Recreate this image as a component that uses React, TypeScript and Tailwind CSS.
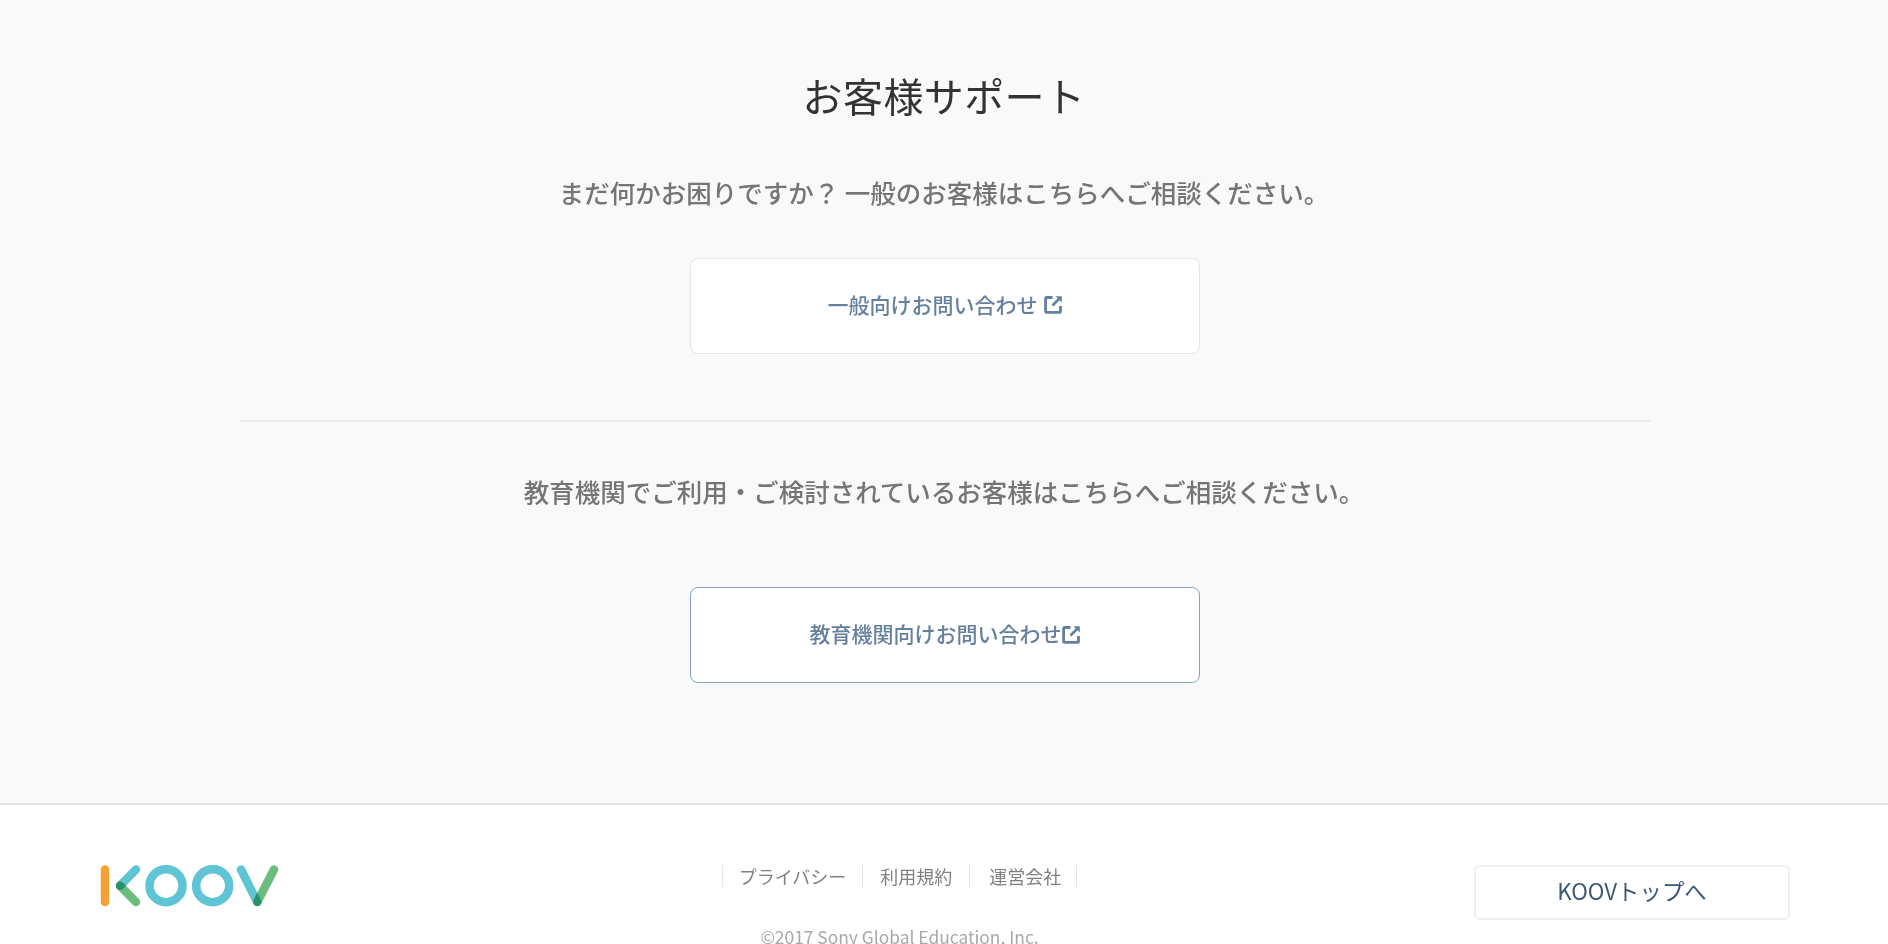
const FONT = "font-['Noto_Sans_CJK_JP','Noto_Sans',sans-serif]";

function ExternalIcon() {
    return (
        <svg width="19" height="19" viewBox="0 0 19 19" fill="none" className="shrink-0">
            <path d="M8.5 2.5H2.6a1 1 0 0 0-1 1v12.9a1 1 0 0 0 1 1h12.9a1 1 0 0 0 1-1V11" stroke="currentColor" strokeWidth="2.8" />
            <path d="M8.5 10.5L15 4" stroke="currentColor" strokeWidth="2.6" />
            <path d="M11.5 1.2h6.3V7.5z" fill="currentColor" />
        </svg>
    );
}

function KoovLogo() {
    return (
        <svg width="179" height="42" viewBox="0 0 179 42" fill="none" strokeWidth="8.5" strokeLinecap="round">
            <path d="M5 4.5V37" stroke="#f5a233" />
            <path d="M36 4.5L20 20.7" stroke="#5fc4d4" />
            <path d="M20 20.7L36 37" stroke="#6bbd7d" className="mix-blend-multiply" />
            <circle cx="66" cy="20.7" r="16.5" stroke="#5fc4d4" />
            <circle cx="112.7" cy="20.7" r="16.5" stroke="#5fc4d4" />
            <path d="M141 4.5L157.3 37" stroke="#5fc4d4" />
            <path d="M174 4.5L157.3 37" stroke="#6bbd7d" className="mix-blend-multiply" />
        </svg>
    );
}

export default function App() {
    return (
        <div className={`h-screen overflow-hidden bg-white ${FONT}`}>
            <main className="h-[805px] pl-[2px] bg-[#f9f9f9] border-b-2 border-[#e2e2e2] flex flex-col items-center">
                <h1 className="mt-[65px] mr-[2px] h-[60px] text-[40px] leading-[60px] text-[#333333] tracking-[0.01em]">お客様サポート</h1>
                <p className="mt-[49px] mr-[2px] h-[36px] text-[25.5px] font-medium leading-[36px] text-[#757575]">まだ何かお困りですか？ 一般のお客様はこちらへご相談ください。</p>
                <a className="mt-[48px] w-[510px] h-[96px] pb-[3px] bg-white border border-[#e6e6e6] rounded-[8px] flex items-center justify-center gap-[6px] text-[21px] font-medium text-[#657f9e]">
                    一般向けお問い合わせ
                    <ExternalIcon />
                </a>
                <hr className="mt-[66px] w-[1410px] border-t-2 border-[#ebebeb]" />
                <p className="mt-[51px] mr-[2px] h-[36px] text-[25.5px] font-medium leading-[36px] text-[#757575]">教育機関でご利用・ご検討されているお客様はこちらへご相談ください。</p>
                <a className="mt-[78px] w-[510px] h-[96px] pb-[2px] bg-white border border-[#7fa3c8] rounded-[8px] flex items-center justify-center text-[21px] font-medium text-[#657f9e]">
                    教育機関向けお問い合わせ
                    <ExternalIcon />
                </a>
            </main>
            <footer className="flex justify-between items-start pl-[100px] pr-[98px] pt-[60px]">
                <KoovLogo />
                <div className="flex flex-col items-center ml-[46px]">
                    <ul className="flex border-r border-[#e5e5e5] text-[18px] leading-[22px] text-[#808080]">
                        <li className="border-l border-[#e5e5e5] px-[16px]">プライバシー</li>
                        <li className="border-l border-[#e5e5e5] px-[17px]">利用規約</li>
                        <li className="border-l border-[#e5e5e5] pl-[19px] pr-[15px]">運営会社</li>
                    </ul>
                    <p className="mt-[37px] text-[17.4px] leading-[26px] text-[#a8a8a8]">©2017 Sony Global Education, Inc.</p>
                </div>
                <a className="w-[316px] h-[55px] pb-[3px] border-2 border-[#f0f0f0] rounded-[6px] flex items-center justify-center text-[22.4px] text-[#3b5878]">KOOVトップへ</a>
            </footer>
        </div>
    );
}
